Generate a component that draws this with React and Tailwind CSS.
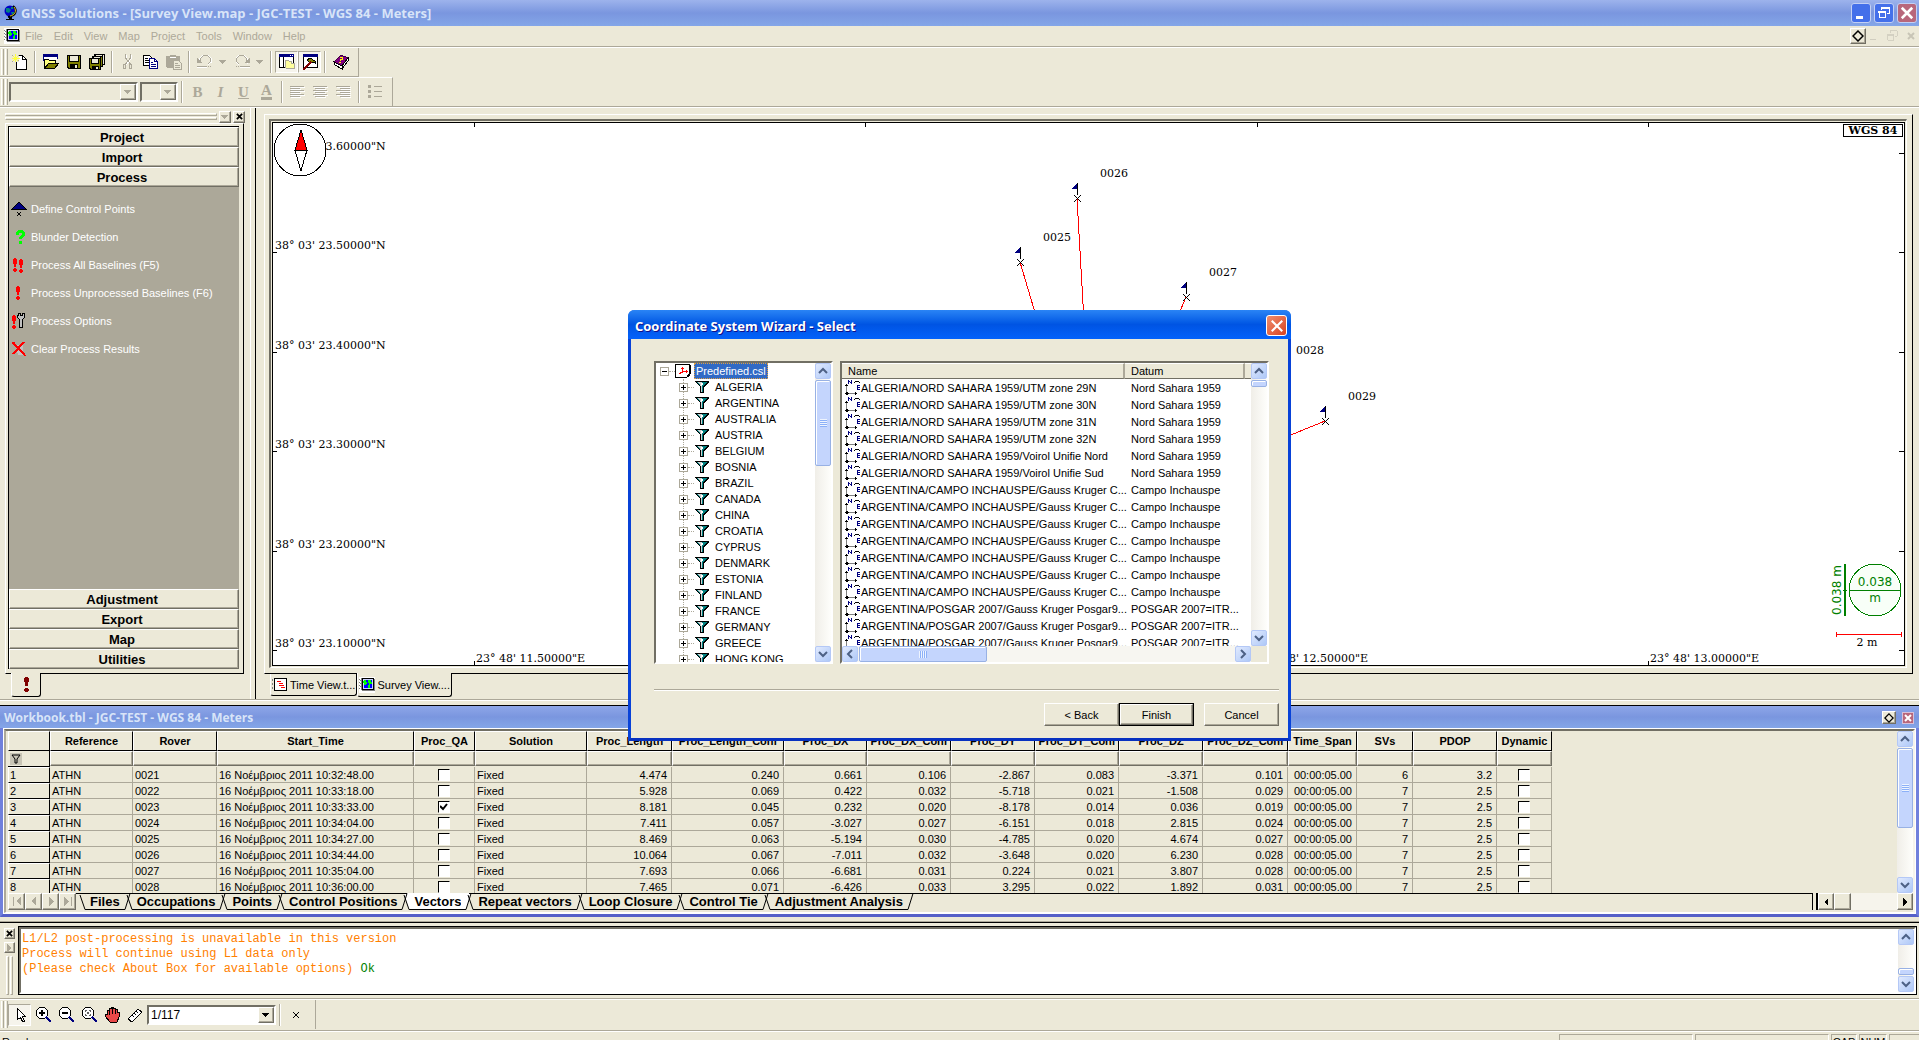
import React, { useState } from "react";

const sunken = "border-2 border-t-[#716f64] border-l-[#716f64] border-b-white border-r-white";
const classicBtn =
  "bg-[#ece9d8] border border-t-white border-l-white border-b-[#716f64] border-r-[#716f64] shadow-[inset_-1px_-1px_0_#aca899]";

const vectorColumns = [
  { name: "Reference", width: 83, align: "left" },
  { name: "Rover", width: 84, align: "left" },
  { name: "Start_Time", width: 197, align: "left" },
  { name: "Proc_QA", width: 61, align: "check" },
  { name: "Solution", width: 112, align: "left" },
  { name: "Proc_Length", width: 85, align: "right" },
  { name: "Proc_Length_Conf", width: 112, align: "right" },
  { name: "Proc_DX", width: 83, align: "right" },
  { name: "Proc_DX_Conf", width: 84, align: "right" },
  { name: "Proc_DY", width: 84, align: "right" },
  { name: "Proc_DY_Conf", width: 84, align: "right" },
  { name: "Proc_DZ", width: 84, align: "right" },
  { name: "Proc_DZ_Conf", width: 85, align: "right" },
  { name: "Time_Span", width: 69, align: "right" },
  { name: "SVs", width: 56, align: "right" },
  { name: "PDOP", width: 84, align: "right" },
  { name: "Dynamic", width: 55, align: "check" },
];

const vectorRows = [
  ["ATHN", "0021", "16 Νοέμβριος 2011 10:32:48.00", false, "Fixed", "4.474", "0.240", "0.661", "0.106", "-2.867", "0.083", "-3.371", "0.101", "00:00:05.00", "6", "3.2", false],
  ["ATHN", "0022", "16 Νοέμβριος 2011 10:33:18.00", false, "Fixed", "5.928", "0.069", "0.422", "0.032", "-5.718", "0.021", "-1.508", "0.029", "00:00:05.00", "7", "2.5", false],
  ["ATHN", "0023", "16 Νοέμβριος 2011 10:33:33.00", true, "Fixed", "8.181", "0.045", "0.232", "0.020", "-8.178", "0.014", "0.036", "0.019", "00:00:05.00", "7", "2.5", false],
  ["ATHN", "0024", "16 Νοέμβριος 2011 10:34:04.00", false, "Fixed", "7.411", "0.057", "-3.027", "0.027", "-6.151", "0.018", "2.815", "0.024", "00:00:05.00", "7", "2.5", false],
  ["ATHN", "0025", "16 Νοέμβριος 2011 10:34:27.00", false, "Fixed", "8.469", "0.063", "-5.194", "0.030", "-4.785", "0.020", "4.674", "0.027", "00:00:05.00", "7", "2.5", false],
  ["ATHN", "0026", "16 Νοέμβριος 2011 10:34:44.00", false, "Fixed", "10.064", "0.067", "-7.011", "0.032", "-3.648", "0.020", "6.230", "0.028", "00:00:05.00", "7", "2.5", false],
  ["ATHN", "0027", "16 Νοέμβριος 2011 10:35:04.00", false, "Fixed", "7.693", "0.066", "-6.681", "0.031", "0.224", "0.021", "3.807", "0.028", "00:00:05.00", "7", "2.5", false],
  ["ATHN", "0028", "16 Νοέμβριος 2011 10:36:00.00", false, "Fixed", "7.465", "0.071", "-6.426", "0.033", "3.295", "0.022", "1.892", "0.031", "00:00:05.00", "7", "2.5", false],
];

const workbookTabs = [
  "Files", "Occupations", "Points", "Control Positions", "Vectors",
  "Repeat vectors", "Loop Closure", "Control Tie", "Adjustment Analysis",
];

const countries = [
  "ALGERIA", "ARGENTINA", "AUSTRALIA", "AUSTRIA", "BELGIUM", "BOSNIA", "BRAZIL",
  "CANADA", "CHINA", "CROATIA", "CYPRUS", "DENMARK", "ESTONIA", "FINLAND",
  "FRANCE", "GERMANY", "GREECE", "HONG KONG",
];

const systems = [
  ["ALGERIA/NORD SAHARA 1959/UTM zone 29N", "Nord Sahara 1959"],
  ["ALGERIA/NORD SAHARA 1959/UTM zone 30N", "Nord Sahara 1959"],
  ["ALGERIA/NORD SAHARA 1959/UTM zone 31N", "Nord Sahara 1959"],
  ["ALGERIA/NORD SAHARA 1959/UTM zone 32N", "Nord Sahara 1959"],
  ["ALGERIA/NORD SAHARA 1959/Voirol Unifie Nord", "Nord Sahara 1959"],
  ["ALGERIA/NORD SAHARA 1959/Voirol Unifie Sud", "Nord Sahara 1959"],
  ...Array.from({ length: 7 }, () => ["ARGENTINA/CAMPO INCHAUSPE/Gauss Kruger C...", "Campo Inchauspe"]),
  ...Array.from({ length: 3 }, () => ["ARGENTINA/POSGAR 2007/Gauss Kruger Posgar9...", "POSGAR 2007=ITR..."]),
];

/* ---------- icons ---------- */

function Icon({ children, size = 16 }) {
  return (
    <svg width={size} height={size} viewBox="0 0 16 16" shapeRendering="crispEdges" className="block shrink-0" aria-hidden="true">
      {children}
    </svg>
  );
}

const NewIcon = () => (
  <Icon>
    <path d="M4.5 1.500h6l4 4v10h-10z" fill="#fff" stroke="#000" />
    <path d="M10.500 1.500v4h4" fill="none" stroke="#000" />
    <path d="M0 1h7v7h-7z" fill="#ece9d8" />
    <path d="M3 0h1v8h-1zM0 4h8v1h-8zM1 2h1v1h-1zM2 3h3v3h-3zM5 2h1v1h-1zM1 6h1v1h-1zM5 6h1v1h-1z" fill="#ffff40" />
    <path d="M0 1h1v1h-1zM6 1h1v1h-1zM0 7h1v1h-1zM6 6h1v1h-1z" fill="#aca899" />
  </Icon>
);
const OpenIcon = () => (
  <Icon>
    <path d="M0 0h15v5h-1v-2h-13v4h-1z" fill="#000080" />
    <path d="M1 3h13v3h-13z" fill="#fff" />
    <path d="M1.500 15v-9.500h4l1 1h6v3" fill="#ffff80" stroke="#000" />
    <path d="M1.500 14.500l4-5h10l-4 5z" fill="#808000" stroke="#000" />
  </Icon>
);
const SaveIcon = () => (
  <Icon>
    <path d="M1 1h14v14h-13l-1-1z" fill="#000" />
    <path d="M2 2h1v6h10v-6h1v12h-2v-4h-8v4h-1l-1-1z" fill="#808000" />
    <path d="M4 2h8v5h-8zM9 11h2v3h-2z" fill="#ece9d8" />
  </Icon>
);
const SaveAllIcon = () => (
  <Icon>
    <path d="M5 0h11v11h-11z" fill="#000" />
    <path d="M7 1h6v2h-6zM14 1h1v9h-1z" fill="#ece9d8" />
    <path d="M3 2h11v11h-11z" fill="#000" />
    <path d="M5 3h6v2h-6z" fill="#ece9d8" />
    <path d="M12 3h1v9h-1z" fill="#808000" />
    <path d="M0 4h12v12h-11l-1-1z" fill="#000" />
    <path d="M1 5h1v5h8v-5h1v10h-1v-3h-7v3h-1l-1-1z" fill="#808000" />
    <path d="M3 5h6v4h-6zM7 13h2v2h-2z" fill="#ece9d8" />
  </Icon>
);
const CutIcon = () => (
  <Icon>
    <path d="M6 1v4l5 6M11 1v4l-5 6" fill="none" stroke="#fff" strokeWidth="1" />
    <path d="M5.500 0v4l5 6M10.500 0v4l-5 6" fill="none" stroke="#aca899" strokeWidth="1" />
    <path d="M3.500 10.500h2v4h-2zM9.500 10.500h2v4h-2z" fill="none" stroke="#aca899" />
  </Icon>
);
const CopyIcon = () => (
  <Icon>
    <path d="M.5 1.500h6l2 2v8h-8z" fill="#fff" stroke="#000" />
    <path d="M2 4h3v1h-3zM2 6h4v1h-4zM2 8h4v1h-4z" fill="#000" />
    <path d="M6.500 4.500h5l3 3v7h-8z" fill="#fff" stroke="#000080" />
    <path d="M11.500 4.500v3h3M8 8.500h2M8 10.500h5M8 12.500h5" fill="none" stroke="#000080" />
  </Icon>
);
const PasteIcon = () => (
  <Icon>
    <path d="M0 2h4v-1h6v1h4v12h-13l-1-1z" fill="#aca899" />
    <path d="M4 3h6v1h-6z" fill="#fff" />
    <path d="M7.500 6.500h5l3 3v6h-8z" fill="#ece9d8" stroke="#aca899" />
    <path d="M9 9.500h3M9 11.500h5M9 13.500h5" stroke="#aca899" />
  </Icon>
);
const UndoIcon = ({ flip }) => (
  <Icon>
    <g transform={flip ? "translate(16 0) scale(-1 1)" : undefined}>
      <path d="M2 9.500l1-5 3-3h5l3 3v4l-3 2" fill="none" stroke="#fff" />
      <path d="M3.500 6.500v-2l3-3h4l3 3v3l-3 3" fill="none" stroke="#aca899" />
      <path d="M0 4v5h5v-1h-1v-1h-1v-1h-1v-1h-1v-1z" fill="#aca899" />
      <path d="M0 12h10v1h-10zM11 12h1v1h-1zM13 12h1v1h-1z" fill="#aca899" />
      <path d="M0 13h10v1h-10z" fill="#fff" />
    </g>
  </Icon>
);
const WindowPanesIcon = () => (
  <Icon>
    <path d="M.5 .5h14v13h-14z" fill="#fff" stroke="#000" />
    <path d="M0 0h15v3h-15z" fill="#000080" />
    <path d="M11 1h1v1h-1zM13 1h1v1h-1z" fill="#fff" />
    <path d="M4.500 3v10" stroke="#000" />
    <path d="M6.500 13.500v-7h3l1 1h2v2h3v5h-8z" fill="#ffff9c" stroke="#aca899" />
  </Icon>
);
const HammerIcon = () => (
  <Icon>
    <path d="M1.500 .5h14v13h-14z" fill="#fff" stroke="#000" />
    <path d="M1 0h15v3h-15z" fill="#000080" />
    <path d="M5 6l3-2 5 3v2l-3-1-2 1z" fill="#808000" stroke="#000" />
    <path d="M9 8l-8 8" stroke="#800000" strokeWidth="2" />
  </Icon>
);
const BookIcon = () => (
  <Icon>
    <path d="M1 8l7-7 7 3-6 8z" fill="#800080" stroke="#400040" />
    <path d="M1 8l8 4v3l-7-4z" fill="#fff" stroke="#000" />
    <path d="M9 12l6-8v3l-6 8z" fill="#fff" stroke="#000" />
    <path d="M7 3h3v3h-2v1h-1v-2h2v-1h-2zM6 8h2v1h-2z" fill="#ffff00" />
  </Icon>
);
const GlobeIcon = () => (
  <svg width="16" height="16" viewBox="0 0 16 16" className="block shrink-0" aria-hidden="true">
    <circle cx="7" cy="6" r="5.500" fill="#0000c8" />
    <path d="M3 3h3l2 2-2 3-3-1zM8 7h3v3h-2zM8 2h2v2h-2z" fill="#008080" />
    <path d="M10 1c5 4 3 10-5 11" fill="none" stroke="#000" strokeWidth="2" />
    <path d="M11 2c3 4 1 8-4 9" fill="none" stroke="#e8c820" strokeWidth="1" />
    <path d="M3 14h8v1h-8zM6 12h3v2h-3z" fill="#000" />
  </svg>
);
const MapIcon = () => (
  <Icon>
    <path d="M0 0h16v16h-16z" fill="#fff" />
    <path d="M0 2h1v1h-1zM1 3h1v1h-1zM0 5h1v1h-1zM1 6h1v1h-1zM0 8h1v1h-1zM1 9h1v1h-1zM0 11h1v1h-1zM2 1h1v12h-1z" fill="#808080" />
    <path d="M3 1h12v1h-12zM3 12h12v1h-12zM14 1h1v12h-1zM3 1h1v12h-1z" fill="#000" />
    <path d="M4 2h10v10h-10z" fill="#c8d0ff" />
    <path d="M5 3h8v8h-8z" fill="#0000ff" />
    <path d="M5 3h2v2h1v2h-1v1h-2v-2h-1v-2h1zM9 3h3v2h1v2h-2v4h-2v-3h1v-2h-1z" fill="#00ff00" />
    <path d="M3 13h13v1h-13zM15 2h1v12h-1z" fill="#808080" />
  </Icon>
);
const TimeIcon = () => (
  <Icon>
    <path d="M0 2h1v2h-1zM0 6h1v2h-1zM0 10h1v2h-1z" fill="#808080" />
    <path d="M2.500 1.500h12v12h-12z" fill="#fff" stroke="#000" />
    <path d="M5 4h4v1h-4zM7 6h4v1h-4zM7 8h5v1h-5zM9 10h4v1h-4z" fill="#f00" />
  </Icon>
);
const FunnelIcon = () => (
  <Icon>
    <path d="M1 2h14v1l-5 5v6h-4v-6l-5-5z" fill="#000" />
    <path d="M3 3h5v10h-1v-5l-4-4z" fill="#d0d0d0" />
    <path d="M8 3h5l-4 5v5h-1z" fill="#008080" />
    <path d="M7 4h2v1l-1 2h-1z" fill="#fff" />
    <path d="M3 3h1v1h1v1h1v1h-1v-1h-1v-1h-1z" fill="#008080" />
  </Icon>
);
const CoordIcon = () => (
  <svg width="16" height="17" viewBox="0 0 16 17" shapeRendering="crispEdges" className="block shrink-0" aria-hidden="true">
    <path d="M1 6h1v7h-1zM3 14h7v1h-7z" fill="#808080" />
    <path d="M1 5h1v1h-1zM0 6h3v1h-3zM10 13h1v3h-1zM11 14h1v1h-1zM1 13h2v1h1v1h-1v1h-2v-1h-1v-1h1z" fill="#000" />
    <path d="M3 1h1v4h-1zM6 1h1v4h-1zM4 2h1v1h-1zM5 3h1v1h-1z" fill="#000080" />
    <path d="M10 2h4v1h-4zM9 3h1v1h-1zM14 3h1v1h-1z" fill="#000" />
    <path d="M12 6h3v1h-2v1h2v1h-2v1h2v1h-3z" fill="#000080" />
  </svg>
);
const CslIcon = () => (
  <Icon>
    <path d="M.5 1.500h14v9l-3 4h-11z" fill="#fff" stroke="#000" />
    <path d="M7 4h1v4h5v1h-5v1h-2v1h-2v-1h1v-1h2zM6 5h3v1h-3zM11 7h1v3h-1z" fill="#f00" />
    <path d="M15 2h1v9h-1zM12 13h2v-2h1v2h-1v1h-2z" fill="#000" />
  </Icon>
);
const ControlPointIcon = () => (
  <Icon>
    <path d="M8 1l7 7h-14z" fill="#000080" stroke="#000" />
    <path d="M6 11l4 4M10 11l-4 4" stroke="#000" />
  </Icon>
);
const QuestionIcon = () => (
  <Icon>
    <path d="M5 3h1v-1h1v-1h5v1h1v1h1v4h-1v1h-1v1h-1v1h-3v-2h1v-1h1v-1h1v-2h-3v2h-3z" fill="#00ff00" />
    <path d="M8 12h3v3h-3z" fill="#00ff00" />
  </Icon>
);
const Bang = ({ x, y = 0 }) => (
  <g transform={`translate(${x} ${y})`} fill="#f00">
    <path d="M1 1h2v1h1v5h-1v3h-2v-3h-1v-5h1z" />
    <path d="M1 11h2v1h1v2h-1v1h-2v-1h-1v-2h1z" />
  </g>
);
const WrenchIcon = () => (
  <Icon>
    <Bang x={1} y={1} />
    <path d="M7.500 .5h2v2h2v-2h2v4l-2 2v8h-3v-8l-2-2z" fill="#c0c0c0" stroke="#000" />
  </Icon>
);
const ClearIcon = () => (
  <Icon>
    <path d="M5 4h7v10h-5z" fill="#c0c0c0" />
    <path d="M2 2l12 12M13 1l-11 12" stroke="#f00" strokeWidth="2" />
    <path d="M1 1h3v1h-3zM13 14h2v1h-2z" fill="#f00" />
  </Icon>
);
const ZoomGlass = ({ children }) => (
  <Icon>
    <g transform="translate(1 0)">
      <path d="M3.500 .5h5l3 3v5l-3 3h-5l-3-3v-5z" fill="#fff" stroke="#000" />
      <path d="M10 10l5 5" stroke="#000080" strokeWidth="2" />
      {children}
    </g>
  </Icon>
);
const HandIcon = () => (
  <Icon>
    <path d="M3 7v-4h2v-2h2v-1h2v1h2v1h2v3h2v5l-2 5h-7l-5-6v-2h2z" fill="#e84848" stroke="#000" />
    <path d="M5.500 3v5M8 1v6M11 2v5" stroke="#000" fill="none" />
  </Icon>
);
const RulerIcon = () => (
  <Icon>
    <path d="M1 12l10-10 4 3-10 10z" fill="#fff" stroke="#000" />
    <path d="M5 8l2 2M7 6l2 2M9 4l2 2" stroke="#000" />
  </Icon>
);
const PointerIcon = () => (
  <Icon>
    <path d="M5.500 1.500v11l3-2 2 4h2l-2-5h3z" fill="#fff" stroke="#000" />
  </Icon>
);

const Diamond = ({ size }) => (
  <svg width={size} height={size} viewBox="0 0 12 12" className="block" aria-hidden="true">
    <path d="M6 1l5 5-5 5-5-5z" fill="none" stroke="#000" strokeWidth="1.500" />
  </svg>
);
const CrossMark = ({ size = 8, color = "#000", width = 2 }) => (
  <svg width={size} height={size} viewBox="0 0 8 8" className="block" aria-hidden="true">
    <path d="M1 1l6 6M7 1l-6 6" stroke={color} strokeWidth={width} />
  </svg>
);
const Triangle = ({ dir = "down", color = "#aca899" }) => {
  const paths = { down: "M0 2h7l-3.500 4z", left: "M6 0v8l-4-4z", right: "M2 0v8l4-4z" };
  return (
    <svg width="8" height="8" viewBox="0 0 8 8" shapeRendering="crispEdges" className="block" aria-hidden="true">
      <path d={paths[dir]} fill={color} />
    </svg>
  );
};

/* ---------- small controls ---------- */

function ToolButton({ label, children, pressed }) {
  return (
    <button
      type="button"
      aria-label={label}
      className={`flex h-[22px] w-[23px] shrink-0 items-center justify-center ${
        pressed ? "border border-t-[#aca899] border-l-[#aca899] border-b-white border-r-white bg-[#f6f4ec]" : ""
      }`}
    >
      {children}
    </button>
  );
}

function Divider() {
  return <div className="mx-[3px] h-[22px] w-[2px] shrink-0 border-l border-l-[#aca899] bg-white" />;
}

function Grip() {
  return (
    <div className="flex h-full w-2 shrink-0 gap-px py-px pl-px">
      <div className="w-[3px] border-r border-l border-l-white border-r-[#aca899]" />
      <div className="w-[3px] border-r border-l border-l-white border-r-[#aca899]" />
    </div>
  );
}

function Combo({ label, width, value, disabled }) {
  return (
    <div className={`relative h-5 shrink-0 ${width} ${sunken} ${disabled ? "bg-[#ece9d8]" : "bg-white"}`}>
      <select
        aria-label={label}
        disabled={disabled}
        className="block h-full w-full appearance-none pl-[2px] text-[12px] leading-4 text-black outline-none"
      >
        <option>{value}</option>
      </select>
      <span className={`pointer-events-none absolute top-0 right-0 flex h-4 w-4 items-center justify-center ${classicBtn}`}>
        <Triangle color={disabled ? "#aca899" : "#000"} />
      </span>
    </div>
  );
}

const chevrons = {
  up: "M4 10l4-4 4 4",
  down: "M4 6l4 4 4-4",
  left: "M10 4l-4 4 4 4",
  right: "M6 4l4 4-4 4",
};

function ScrollArrow({ dir }) {
  return (
    <button
      type="button"
      aria-label={`Scroll ${dir}`}
      className="flex h-4 w-4 shrink-0 items-center justify-center rounded-[2px] border border-[#b4c8f6] bg-gradient-to-br from-[#e1eafe] to-[#aec8f7]"
    >
      <svg width="16" height="16" viewBox="0 0 16 16" className="shrink-0" aria-hidden="true">
        <path d={chevrons[dir]} fill="none" stroke="#4d6185" strokeWidth="2" />
      </svg>
    </button>
  );
}

function ScrollBar({ horizontal, before = "grow-0", thumb, grip = true }) {
  return (
    <div
      className={`flex shrink-0 bg-[#f7f6f1] ${horizontal ? "h-4 w-full" : "h-full w-4 flex-col bg-gradient-to-r from-[#f0eee8] to-[#fefefb]"}`}
    >
      <ScrollArrow dir={horizontal ? "left" : "up"} />
      <div className={before} />
      <div
        className={`flex shrink-0 items-center justify-center rounded-[2px] border border-[#98b1e4] bg-[#c4d5fd] shadow-[inset_1px_1px_0_#fff] ${thumb} ${
          horizontal ? "mx-px" : "my-px w-full"
        }`}
      >
        {grip && (
          <div
            className={
              horizontal
                ? "h-[7px] w-2 bg-[repeating-linear-gradient(90deg,#eef4fe_0_1px,#8cb0f8_1px_2px)]"
                : "h-2 w-[7px] bg-[repeating-linear-gradient(180deg,#eef4fe_0_1px,#8cb0f8_1px_2px)]"
            }
          />
        )}
      </div>
      <div className={before === "grow-0" ? "grow" : "grow-0"} />
      <ScrollArrow dir={horizontal ? "right" : "down"} />
    </div>
  );
}

/* ---------- window chrome ---------- */

function TitleBar() {
  const btn = "flex size-5 items-center justify-center rounded-[3px] border border-[#c3d0f4]";
  return (
    <header className="flex h-[26px] shrink-0 items-center bg-gradient-to-b from-[#9db3ec] via-[#7a96df] to-[#84a6e8] pr-[2px] pl-[3px]">
      <GlobeIcon />
      <h1 className="ml-[2px] grow font-[Open_Sans,sans-serif] text-[13px] leading-[26px] font-bold text-[#d8e4f8]">
        GNSS Solutions - [Survey View.map - JGC-TEST - WGS 84 - Meters]
      </h1>
      <div className="flex gap-[3px]">
        <button type="button" aria-label="Minimize" className={`${btn} bg-[#4470ea]`}>
          <Icon><path d="M3 11h7v3h-7z" fill="#fff" /></Icon>
        </button>
        <button type="button" aria-label="Restore" className={`${btn} bg-[#4470ea]`}>
          <Icon>
            <path d="M5 2h9v7h-3v-1h2v-4h-7v1h-1z" fill="#fff" />
            <path d="M3 7.500h6v5h-6z" fill="none" stroke="#fff" strokeWidth="1" />
            <path d="M2 6h8v2h-8z" fill="#fff" />
          </Icon>
        </button>
        <button type="button" aria-label="Close" className={`${btn} bg-[#b8677b]`}>
          <CrossMark size={14} color="#fff" width={1.5} />
        </button>
      </div>
    </header>
  );
}

function MenuBar() {
  const menus = ["File", "Edit", "View", "Map", "Project", "Tools", "Window", "Help"];
  return (
    <nav className="flex h-[21px] shrink-0 items-center border-b border-b-[#aca899] pr-px pl-1">
      <MapIcon />
      <div className="flex grow gap-[11px] pl-[5px]">
        {menus.map((menu) => (
          <button key={menu} type="button" className="leading-4 text-[#aca899]">
            {menu}
          </button>
        ))}
      </div>
      <button type="button" aria-label="Pin" className={`mr-[2px] flex size-4 items-center justify-center ${classicBtn}`}>
        <Diamond size={12} />
      </button>
      <div className="flex gap-1" aria-hidden="true">
        <Icon size={14}><path d="M2 11h7v2h-7z" fill="#d0cdbf" /></Icon>
        <Icon size={14}><path d="M5 5v-3h8v6h-3M2 6h7v7h-7zM2 7h7" fill="none" stroke="#d0cdbf" strokeWidth="1" /></Icon>
        <span className="p-[3px]"><CrossMark color="#c8c5b6" /></span>
      </div>
    </nav>
  );
}

function StandardToolbar() {
  return (
    <div className="flex border-t border-t-white">
      <div className="flex h-[29px] items-center border-r border-b border-r-[#aca899] border-b-[#aca899] pr-[6px]">
        <Grip />
        <ToolButton label="New"><NewIcon /></ToolButton>
        <Divider />
        <ToolButton label="Open"><OpenIcon /></ToolButton>
        <ToolButton label="Save"><SaveIcon /></ToolButton>
        <ToolButton label="Save all"><SaveAllIcon /></ToolButton>
        <Divider />
        <ToolButton label="Cut"><CutIcon /></ToolButton>
        <ToolButton label="Copy"><CopyIcon /></ToolButton>
        <ToolButton label="Paste"><PasteIcon /></ToolButton>
        <Divider />
        <ToolButton label="Undo"><UndoIcon /></ToolButton>
        <button type="button" aria-label="Undo list" className="flex w-[14px] justify-center"><Triangle /></button>
        <ToolButton label="Redo"><UndoIcon flip /></ToolButton>
        <button type="button" aria-label="Redo list" className="flex w-[14px] justify-center"><Triangle /></button>
        <Divider />
        <ToolButton label="Workbook" pressed><WindowPanesIcon /></ToolButton>
        <ToolButton label="Tools" pressed><HammerIcon /></ToolButton>
        <Divider />
        <ToolButton label="Help"><BookIcon /></ToolButton>
      </div>
    </div>
  );
}

function AlignLines({ rows }) {
  return (
    <Icon>
      {rows.map(([x, w], i) => (
        <g key={i}>
          <path d={`M${x + 1} ${i * 2 + 3}h${w}v1h-${w}z`} fill="#fff" />
          <path d={`M${x} ${i * 2 + 2}h${w}v1h-${w}z`} fill="#aca899" />
        </g>
      ))}
    </Icon>
  );
}

function FormatToolbar() {
  const letter = "font-[Liberation_Serif,serif] text-[15px] leading-4 font-bold text-[#aca899]";
  const wide = [0, 14];
  const short = { left: [0, 10], center: [2, 10], right: [4, 10] };
  return (
    <div className="flex border-b border-b-[#aca899]">
      <div className="flex h-[29px] items-center border-t border-r border-t-white border-r-[#aca899] pr-[6px]">
        <Grip />
        <div className="flex gap-[2px] pl-px">
          <Combo label="Font" width="w-[129px]" value="" disabled />
          <Combo label="Font size" width="w-[38px]" value="" disabled />
        </div>
        <Divider />
        <ToolButton label="Bold"><span className={letter}>B</span></ToolButton>
        <ToolButton label="Italic"><span className={`${letter} italic`}>I</span></ToolButton>
        <ToolButton label="Underline"><span className={`${letter} underline`}>U</span></ToolButton>
        <ToolButton label="Colour"><span className={`${letter} border-b-[3px] border-b-[#aca899] leading-[13px]`}>A</span></ToolButton>
        <Divider />
        {["left", "center", "right"].map((side) => (
          <ToolButton key={side} label={`Align ${side}`}>
            <AlignLines rows={[wide, short[side], wide, short[side], wide, short[side]]} />
          </ToolButton>
        ))}
        <Divider />
        <ToolButton label="Bullets">
          <Icon>
            <path d="M1 1h3v3h-3zM1 6h3v3h-3zM1 11h3v3h-3zM7 2h8v1h-8zM7 7h8v1h-8zM7 12h8v1h-8z" fill="#aca899" />
          </Icon>
        </ToolButton>
      </div>
    </div>
  );
}

/* ---------- left panel ---------- */

function SectionButton({ children }) {
  return (
    <button type="button" className={`flex h-5 w-full shrink-0 items-center justify-center pt-px pr-1 text-[13px] font-bold ${classicBtn}`}>
      {children}
    </button>
  );
}

function SidePanel() {
  const tasks = [
    ["Define Control Points", <ControlPointIcon />],
    ["Blunder Detection", <QuestionIcon />],
    ["Process All Baselines (F5)", <Icon><Bang x={2} /><Bang x={8} y={1} /></Icon>],
    ["Process Unprocessed Baselines (F6)", <Icon><Bang x={5} /></Icon>],
    ["Process Options", <WrenchIcon />],
    ["Clear Process Results", <ClearIcon />],
  ];
  return (
    <aside className="flex w-[251px] shrink-0 flex-col border-r border-r-white pl-[5px]">
      <div className="flex h-[15px] shrink-0 items-center gap-[2px] pt-[2px] pr-[5px]">
        <div className="flex grow flex-col gap-px">
          <div className="h-[3px] border border-t-white border-l-white border-b-[#aca899] border-r-[#aca899]" />
          <div className="h-[3px] border border-t-white border-l-white border-b-[#aca899] border-r-[#aca899]" />
        </div>
        <button type="button" aria-label="Dock" className={`flex size-3 items-center justify-center ${classicBtn}`}>
          <Triangle />
        </button>
        <button type="button" aria-label="Close panel" className={`flex size-3 items-center justify-center ${classicBtn}`}>
          <CrossMark size={7} />
        </button>
      </div>
      <div className="mr-[6px] flex min-h-0 grow flex-col border border-t-white border-l-white border-r-black border-b-black pt-[2px] pr-1 pb-1 pl-[2px]">
        <div className="flex min-h-0 grow flex-col border-t border-l border-t-black border-l-black">
          {["Project", "Import", "Process"].map((name) => (
            <SectionButton key={name}>{name}</SectionButton>
          ))}
          <ul className="grow bg-[#aca899] pt-2">
            {tasks.map(([name, icon]) => (
              <li key={name}>
                <button type="button" className="flex h-7 items-center gap-1 pl-[2px] text-white">
                  {icon}
                  {name}
                </button>
              </li>
            ))}
          </ul>
          {["Adjustment", "Export", "Map", "Utilities"].map((name) => (
            <SectionButton key={name}>{name}</SectionButton>
          ))}
        </div>
      </div>
      <div className="-mt-px flex h-[26px] shrink-0 pl-[6px]">
        <button
          type="button"
          aria-label="Process"
          className="relative mb-[2px] flex w-[30px] items-center justify-center rounded-b-[3px] border-r border-b border-l border-r-black border-b-black border-l-white bg-[#ece9d8]"
        >
          <svg width="5" height="15" viewBox="0 0 5 15" shapeRendering="crispEdges" aria-hidden="true">
            <path d="M1 0h3v1h1v4h-1v4h-3v-4h-1v-4h1zM1 11h3v1h1v2h-1v1h-3v-1h-1v-2h1z" fill="#800000" />
          </svg>
        </button>
      </div>
    </aside>
  );
}

/* ---------- map ---------- */

const stations = [
  { id: "0025", x: 747, y: 139 },
  { id: "0026", x: 804, y: 75 },
  { id: "0027", x: 913, y: 174 },
  { id: "0029", x: 1052, y: 298 },
];

function MapCanvas() {
  const topTicks = [201, 592, 984, 1375];
  const lats = [
    [30, "38° 03' 23.60000\"N"],
    [129, "38° 03' 23.50000\"N"],
    [229, "38° 03' 23.40000\"N"],
    [328, "38° 03' 23.30000\"N"],
    [428, "38° 03' 23.20000\"N"],
    [527, "38° 03' 23.10000\"N"],
  ];
  const lons = [
    [201, "23° 48' 11.50000\"E"],
    [592, "23° 48' 12.00000\"E"],
    [984, "23° 48' 12.50000\"E"],
    [1375, "23° 48' 13.00000\"E"],
  ];
  return (
    <div className="relative min-h-0 grow overflow-hidden border border-black bg-white font-[DejaVu_Serif,serif]">
      <svg className="absolute inset-0 h-full w-full" shapeRendering="crispEdges">
        {topTicks.map((x) => (
          <path key={x} d={`M${x} 0h1v4h-1z`} />
        ))}
        {lats.map(([y, label]) => (
          <g key={label}>
            <path d={`M0 ${y}h4v1h-4z`} />
            <text x="2" y={y - 3} fontSize="11">{label}</text>
          </g>
        ))}
        {stations.map((s) => (
          <line key={s.id} x1={s.x} y1={s.y} x2="822" y2="392" stroke="#f00" />
        ))}
        {stations.map((s) => (
          <g key={s.id} transform={`translate(${s.x} ${s.y})`}>
            <path d="M-3 -3l7 7M4 -3l-7 7" stroke="#000" />
            <path d="M0 -15h1v12h-1z" />
            <path d="M0 -15v6h-6z" fill="#000080" />
            <text x="23" y="-21" fontSize="11">{s.id}</text>
          </g>
        ))}
        <text x="703" y="195" fontSize="11">0024</text>
        <text x="1023" y="231" fontSize="11">0028</text>
        <path d="M0 0h53v53h-53z" fill="#fff" />
        <circle cx="27" cy="27" r="26" fill="#fff" stroke="#000" />
        <path d="M28 7l6 20h-12z" fill="#f00" stroke="#000" />
        <path d="M28 48l6-21h-12z" fill="#fff" stroke="#000" />
      </svg>
      {lons.map(([x, label]) => (
        <div key={label} className="absolute bottom-0 h-1 w-px bg-black" style={{ left: x }}>
          <span className="absolute bottom-0 left-[2px] text-[11px] leading-[13px] whitespace-nowrap">{label}</span>
        </div>
      ))}
      <div className="absolute top-px right-px flex h-[13px] w-[60px] items-center justify-center border border-black bg-white text-[11px] font-bold">
        WGS 84
      </div>
      <svg className="absolute right-0 bottom-0" width="80" height="120" shapeRendering="crispEdges">
        <path d="M75 6h5v1h-5zM75 105h5v1h-5z" />
        <g fill="#008000" fontFamily="DejaVu Sans, sans-serif" fontSize="12">
          <circle cx="51" cy="45" r="26" fill="#f8fff8" stroke="#008000" />
          <path d="M25 45h52v1h-52zM20 19h2v52h-2zM19 45h4v1h-4z" />
          <text x="51" y="41" textAnchor="middle">0.038</text>
          <text x="51" y="57" textAnchor="middle">m</text>
          <text transform="translate(17 70) rotate(-90)">0.038 m</text>
        </g>
        <path d="M12 89h65v1h-65zM12 87h1v5h-1zM77 87h1v5h-1z" fill="#f00" />
        <text x="43" y="101" fontSize="11" textAnchor="middle">2 m</text>
      </svg>
      <svg className="absolute top-0 right-0" width="5" height="480" shapeRendering="crispEdges">
        {[30, 129, 229, 328].map((y) => (
          <path key={y} d={`M0 ${y}h5v1h-5z`} />
        ))}
      </svg>
    </div>
  );
}

function MapPane() {
  const tab = "flex items-center gap-[2px] rounded-b-[3px] border-r border-b border-l border-r-black border-b-black border-l-white bg-[#ece9d8] pr-px pl-px";
  return (
    <section className="ml-[4px] flex min-w-0 grow flex-col border-l border-l-black pt-[6px] pr-[6px] pl-2">
      <div className="flex min-h-0 grow flex-col border border-t-white border-l-white border-r-black border-b-black p-1 pr-[5px] pb-[5px]">
        <div className="flex min-h-0 grow flex-col border-t-2 border-l-2 border-r border-b border-t-[#716f64] border-l-[#716f64] border-r-white border-b-white p-px">
          <MapCanvas />
        </div>
      </div>
      <div className="-mt-px flex h-[26px] shrink-0 items-start pl-[6px]">
        <button type="button" className={`${tab} mt-px h-[22px]`}>
          <TimeIcon />
          Time View.t...
        </button>
        <button type="button" className={`${tab} relative h-6`}>
          <MapIcon />
          Survey View....
        </button>
      </div>
    </section>
  );
}

/* ---------- workbook ---------- */

function CheckCell({ label, checked }) {
  const [on, setOn] = useState(checked);
  return (
    <span className="relative mx-auto block size-3">
      <input
        type="checkbox"
        aria-label={label}
        checked={on}
        onChange={() => setOn(!on)}
        className="block size-3 appearance-none border border-t-black border-l-black border-b-white border-r-white bg-white"
      />
      {on && (
        <svg className="pointer-events-none absolute top-[2px] left-[2px]" width="8" height="8" viewBox="0 0 8 8" aria-hidden="true">
          <path d="M0 3l3 3 4-5" fill="none" stroke="#000" strokeWidth="2" />
        </svg>
      )}
    </span>
  );
}

const cellAlign = {
  left: "text-left pl-[2px]",
  right: "text-right pr-1",
  check: "text-center",
};

function VectorTable() {
  const th = "border-t border-l border-r border-b border-t-white border-l-white border-r-black border-b-black p-0";
  return (
    <table className="table-fixed border-separate border-spacing-0 leading-[14px]" style={{ width: 1544 }}>
      <colgroup>
        <col style={{ width: 42 }} />
        {vectorColumns.map((col) => (
          <col key={col.name} style={{ width: col.width }} />
        ))}
      </colgroup>
      <thead>
        <tr className="h-5">
          <th className={th} aria-label="Row" />
          {vectorColumns.map((col) => (
            <th key={col.name} scope="col" className={`${th} pb-px font-bold whitespace-nowrap`}>
              {col.name}
            </th>
          ))}
        </tr>
        <tr className="h-4">
          <td className="border-r border-b border-r-black border-b-black p-0 pl-[2px]">
            <span className="flex size-3 items-center justify-center bg-[#c8c5b6]">
              <svg width="10" height="10" viewBox="0 0 10 10" aria-hidden="true">
                <path d="M1 1h8l-3 4v4h-2v-4z" fill="none" stroke="#000" />
              </svg>
            </span>
          </td>
          {vectorColumns.map((col) => (
            <td key={col.name} className="p-0 align-top">
              <button type="button" aria-label={`Filter ${col.name}`} className={`block h-[15px] w-full ${classicBtn}`} />
            </td>
          ))}
        </tr>
      </thead>
      <tbody>
        {vectorRows.map((row, r) => (
          <tr key={row[1]} className="h-4">
            <th scope="row" className={`${th} pl-px text-left font-normal`}>{r + 1}</th>
            {row.map((value, c) => (
              <td
                key={c}
                className={`border-r border-b border-r-[#aca899] border-b-[#aca899] p-0 whitespace-nowrap ${cellAlign[vectorColumns[c].align]}`}
              >
                {typeof value === "boolean" ? (
                  <CheckCell label={`${vectorColumns[c].name} ${row[1]}`} checked={value} />
                ) : (
                  value
                )}
              </td>
            ))}
          </tr>
        ))}
      </tbody>
    </table>
  );
}

// Slanted edges drawn between two sheet tabs
function TabEdge({ whiteLeft, whiteRight, first, last }) {
  return (
    <svg
      width={first ? 14 : 17}
      height="17"
      viewBox={first ? "3 0 14 17" : "0 0 17 17"}
      className="block shrink-0"
      aria-hidden="true"
    >
      {whiteLeft && <path d="M0 0h10l-5 16h-5z" fill="#fff" />}
      {whiteRight && <path d="M17 0h-10l5 16h5z" fill="#fff" />}
      {!whiteLeft && <path d="M0 .5h10" stroke="#000" />}
      {!whiteRight && <path d="M8 .5h9" stroke="#000" />}
      {!first && <path d="M0 16.500h5l5 -16" fill="none" stroke="#000" />}
      {!last && <path d="M7 2l5 14.500h5" fill="none" stroke="#000" />}
    </svg>
  );
}

function SheetTabs() {
  const [active, setActive] = useState("Vectors");
  const nav = [
    ["First", "M3 2h1v9h-1zM11 2v9l-5-5z"],
    ["Previous", "M9 2v9l-5-5z"],
    ["Next", "M5 2v9l5-5z"],
    ["Last", "M3 2v9l5-5zM10 2h1v9h-1z"],
  ];
  return (
    <div className="flex h-[17px] shrink-0">
      {nav.map(([name, d]) => (
        <button key={name} type="button" aria-label={name} className={`flex w-[17px] items-center justify-center ${classicBtn}`}>
          <svg width="14" height="13" viewBox="0 0 14 13" shapeRendering="crispEdges" aria-hidden="true">
            <path d={d} fill="#aca899" />
          </svg>
        </button>
      ))}
      {workbookTabs.map((name, i) => (
        <React.Fragment key={name}>
          <TabEdge
            first={i === 0}
            whiteLeft={i > 0 && workbookTabs[i - 1] === active}
            whiteRight={name === active}
          />
          <button
            type="button"
            onClick={() => setActive(name)}
            className={`border-b border-b-black text-[13px] leading-[15px] font-bold whitespace-nowrap ${
              name === active ? "bg-white pt-px" : "border-t border-t-black"
            }`}
          >
            {name}
          </button>
        </React.Fragment>
      ))}
      <TabEdge last />
      <div className="grow border-t border-r border-t-black border-r-black" />
      <div className="ml-[3px] flex w-[97px] shrink-0 border-l-2 border-l-black bg-[#f6f4ec]">
        <button type="button" aria-label="Scroll left" className={`flex w-4 items-center justify-center ${classicBtn}`}>
          <Triangle dir="left" color="#000" />
        </button>
        <div className={`w-[17px] ${classicBtn}`} />
        <div className="grow" />
        <button type="button" aria-label="Scroll right" className={`flex w-4 items-center justify-center ${classicBtn}`}>
          <Triangle dir="right" color="#000" />
        </button>
      </div>
    </div>
  );
}

function Workbook() {
  return (
    <section className="shrink-0 border-t border-t-black">
      <div className="border-x-[3px] border-b-[3px] border-x-[#7080dc] border-b-[#5560c8] bg-[#ece9d8]">
        <div className="-mx-[3px] flex h-[22px] items-center bg-gradient-to-b from-[#8ea6e8] via-[#7a96df] to-[#84a6e8] pt-px pr-[5px] pl-1">
          <h2 className="grow font-[Open_Sans,sans-serif] text-[12px] leading-[20px] font-bold text-[#d8e4f8]">
            Workbook.tbl - JGC-TEST - WGS 84 - Meters
          </h2>
          <button type="button" aria-label="Pin" className={`mr-[6px] flex h-[13px] w-[14px] items-center justify-center ${classicBtn}`}>
            <Diamond size={10} />
          </button>
          <button type="button" aria-label="Close workbook" className="flex size-3 items-center justify-center border border-[#d8c0d8] bg-[#b8677b]">
            <CrossMark color="#fff" />
          </button>
        </div>
        <div className="border border-white">
          <div className="border-t-2 border-l-2 border-r-2 border-b border-t-[#716f64] border-l-[#aca899] border-r-[#f6f4ec] border-b-white pb-[2px] pl-[2px]">
            <div className="flex h-[162px]">
              <div className="min-w-0 grow overflow-hidden">
                <VectorTable />
              </div>
              <ScrollBar thumb="h-20" />
            </div>
            <SheetTabs />
          </div>
        </div>
      </div>
    </section>
  );
}

/* ---------- output + status ---------- */

function OutputPane() {
  return (
    <section className="mt-[5px] flex shrink-0 border-t border-t-black pt-[3px] pr-[2px] pb-[3px] shadow-[0_-1px_0_#aca899]">
      <div className="flex w-[18px] shrink-0 flex-col items-center gap-[3px] pt-[2px]">
        <button type="button" aria-label="Close output" className={`flex size-[11px] items-center justify-center ${classicBtn}`}>
          <CrossMark size={7} />
        </button>
        <button type="button" aria-label="Dock output" className={`flex size-[11px] items-center justify-center ${classicBtn}`}>
          <Triangle dir="right" />
        </button>
        <div className="flex grow gap-px">
          <div className="w-[3px] border border-t-white border-l-white border-b-[#aca899] border-r-[#aca899]" />
          <div className="w-[3px] border border-t-white border-l-white border-b-[#aca899] border-r-[#aca899]" />
        </div>
      </div>
      <div className="flex h-[69px] grow border border-black">
        <div className={`flex grow bg-white ${sunken}`}>
          <pre className="grow pt-[3px] pl-px font-[Liberation_Mono,monospace] text-[12px] leading-[15px] text-[#ff8000]">
            {"L1/L2 post-processing is unavailable in this version\nProcess will continue using L1 data only\n(Please check About Box for available options) "}
            <span className="text-[#008000]">Ok</span>
          </pre>
          <ScrollBar thumb="h-[7px]" before="grow" grip={false} />
        </div>
      </div>
    </section>
  );
}

function ViewToolbar() {
  return (
    <div className="flex shrink-0 border-t border-b border-t-[#aca899] border-b-[#aca899] pt-px pb-px shadow-[inset_0_1px_0_#fff]">
      <div className="flex h-[29px] items-center border-r border-r-[#aca899] pr-2">
        <Grip />
        <ToolButton label="Select" pressed><PointerIcon /></ToolButton>
        <ToolButton label="Zoom in"><ZoomGlass><path d="M5 3h2v2h2v2h-2v2h-2v-2h-2v-2h2z" /></ZoomGlass></ToolButton>
        <ToolButton label="Zoom out"><ZoomGlass><path d="M3 5h6v2h-6z" /></ZoomGlass></ToolButton>
        <ToolButton label="Zoom all">
          <ZoomGlass><path d="M3 3h2v1h-1v1h-1zM7 3h2v2h-1v-1h-1zM3 7h1v1h1v1h-2zM8 7h1v2h-2v-1h1zM5 5h2v2h-2z" fill="#606060" /></ZoomGlass>
        </ToolButton>
        <ToolButton label="Pan"><HandIcon /></ToolButton>
        <ToolButton label="Measure"><RulerIcon /></ToolButton>
        <div className="pl-px">
          <Combo label="Scale" width="w-[129px]" value="1/117" />
        </div>
        <Divider />
        <ToolButton label="Clear"><CrossMark width={1} /></ToolButton>
      </div>
    </div>
  );
}

function StatusBar() {
  const cell = "border-t border-l border-r border-t-[#aca899] border-l-[#aca899] border-r-white";
  return (
    <footer className="flex h-[9px] shrink-0 gap-[2px] overflow-hidden border-t border-t-white">
      <div className="grow pt-[3px] pl-[2px] leading-[14px]">Ready</div>
      <div className="flex h-5 gap-[2px] pt-[2px] leading-[14px]">
        <div className={`w-[134px] ${cell}`} />
        <div className={`w-[134px] ${cell}`} />
        <div className={`w-[26px] text-center ${cell}`}>CAP</div>
        <div className={`w-7 text-center ${cell}`}>NUM</div>
        <div className="w-[30px] border-t border-l border-t-[#aca899] border-l-[#aca899]" />
      </div>
    </footer>
  );
}

/* ---------- dialog ---------- */

function Expander({ open }) {
  return (
    <button
      type="button"
      aria-label={open ? "Collapse" : "Expand"}
      className="relative flex size-[9px] shrink-0 items-center justify-center border border-[#aca899] bg-white"
    >
      <svg width="5" height="5" viewBox="0 0 5 5" shapeRendering="crispEdges" aria-hidden="true">
        <path d={open ? "M0 2h5v1h-5z" : "M0 2h5v1h-5zM2 0h1v5h-1z"} />
      </svg>
    </button>
  );
}

function CountryTree() {
  return (
    <div className={`flex h-[303px] w-[179px] shrink-0 bg-white ${sunken}`}>
      <div className="min-w-0 grow overflow-hidden pl-1">
        <div className="flex h-4 items-center">
          <Expander open />
          <span className="w-[6px] border-t border-dotted border-t-[#aca899]" />
          <CslIcon />
          <span className="ml-[3px] border border-dotted border-[#e0a040] bg-[#316ac5] px-px leading-[14px] text-white">Predefined.csl</span>
        </div>
        <ul className="ml-[23px] border-l border-dotted border-l-[#aca899]">
          {countries.map((name) => (
            <li key={name} className="-ml-[5px] flex h-4 items-center">
              <Expander />
              <span className="w-[6px] border-t border-dotted border-t-[#aca899]" />
              <FunnelIcon />
              <span className="ml-[5px] whitespace-nowrap">{name}</span>
            </li>
          ))}
        </ul>
      </div>
      <ScrollBar thumb="h-[86px]" />
    </div>
  );
}

function SystemList() {
  const th = "h-4 p-0 text-left font-normal leading-[14px] bg-[#ece9d8] border-b border-b-[#716f64] border-r-2 border-r-[#aca899] border-t border-t-white";
  return (
    <div className={`flex h-[303px] min-w-0 grow bg-white ${sunken}`}>
      <div className="flex min-w-0 grow flex-col">
        <div className="min-h-0 grow overflow-hidden">
          <table className="w-full table-fixed border-separate border-spacing-0 whitespace-nowrap">
            <colgroup>
              <col />
              <col className="w-[120px]" />
              <col className="w-[6px]" />
            </colgroup>
            <thead>
              <tr>
                <th scope="col" className={`${th} pl-[6px]`}>Name</th>
                <th scope="col" className={`${th} pl-[6px]`}>Datum</th>
                <th className="border-t border-b border-t-white border-b-[#716f64] bg-[#ece9d8] p-0" aria-label="Filler" />
              </tr>
            </thead>
            <tbody>
              {systems.map(([name, datum], i) => (
                <tr key={i} className="h-[17px]">
                  <td className="p-0 pl-[3px]">
                    <div className="flex h-[17px] items-center">
                      <CoordIcon />
                      {name}
                    </div>
                  </td>
                  <td className="p-0 pl-[6px]">{datum}</td>
                  <td />
                </tr>
              ))}
            </tbody>
          </table>
        </div>
        <ScrollBar horizontal thumb="w-[128px]" />
      </div>
      <div className="flex w-4 shrink-0 flex-col bg-[#ece9d8]">
        <div className="min-h-0 grow">
          <ScrollBar thumb="h-[7px]" grip={false} />
        </div>
        <div className="h-4" />
      </div>
    </div>
  );
}

function CoordinateDialog() {
  const btn = "h-[23px] w-[75px] text-center";
  return (
    <div className="pointer-events-none fixed inset-x-0 top-[310px] flex justify-center">
      <div role="dialog" aria-label="Coordinate System Wizard" className="pointer-events-auto w-[663px] rounded-t-[7px] border-x-[3px] border-b-[3px] border-x-[#0842d8] border-b-[#0831c0] bg-[#ece9d8]">
        <div className="-mx-[3px] flex h-[29px] items-center rounded-t-[6px] bg-gradient-to-b from-[#2a84f5] via-[#0054e3] to-[#0362fb] pt-[2px] pr-1 pl-[7px]">
          <h2 className="grow font-[Open_Sans,sans-serif] text-[13px] leading-[26px] font-bold text-white [text-shadow:1px_1px_0_#0f1089]">
            Coordinate System Wizard - Select
          </h2>
          <button type="button" aria-label="Close dialog" className="flex size-[21px] items-center justify-center rounded-[3px] border border-white bg-gradient-to-br from-[#ee8c6c] to-[#d8401c]">
            <CrossMark size={14} color="#fff" width={1.2} />
          </button>
        </div>
        <div className="flex gap-[7px] pt-[22px] pr-[19px] pl-[23px]">
          <CountryTree />
          <SystemList />
        </div>
        <div className="mr-[9px] ml-[23px] pt-[25px] pb-3">
          <div className="h-[2px] border-t border-t-[#aca899] bg-white" />
          <div className="flex justify-end pt-3">
            <button type="button" className={`${btn} ${classicBtn}`}>&lt; Back</button>
            <button type="button" className="h-[23px] w-[75px] border border-black">
              <span className={`flex h-full items-center justify-center ${classicBtn}`}>Finish</span>
            </button>
            <button type="button" className={`ml-[10px] ${btn} ${classicBtn}`}>Cancel</button>
          </div>
        </div>
      </div>
    </div>
  );
}

export default function App() {
  return (
    <div className="flex h-screen flex-col overflow-hidden bg-[#ece9d8] font-[Liberation_Sans,Arial,sans-serif] text-[11px] leading-4 text-black">
      <TitleBar />
      <MenuBar />
      <StandardToolbar />
      <FormatToolbar />
      <main className="flex min-h-0 grow border-t border-b border-t-white border-b-[#aca899]">
        <SidePanel />
        <MapPane />
      </main>
      <div className="h-[5px] shrink-0 border-t border-t-white" />
      <Workbook />
      <OutputPane />
      <ViewToolbar />
      <StatusBar />
      <CoordinateDialog />
    </div>
  );
}
